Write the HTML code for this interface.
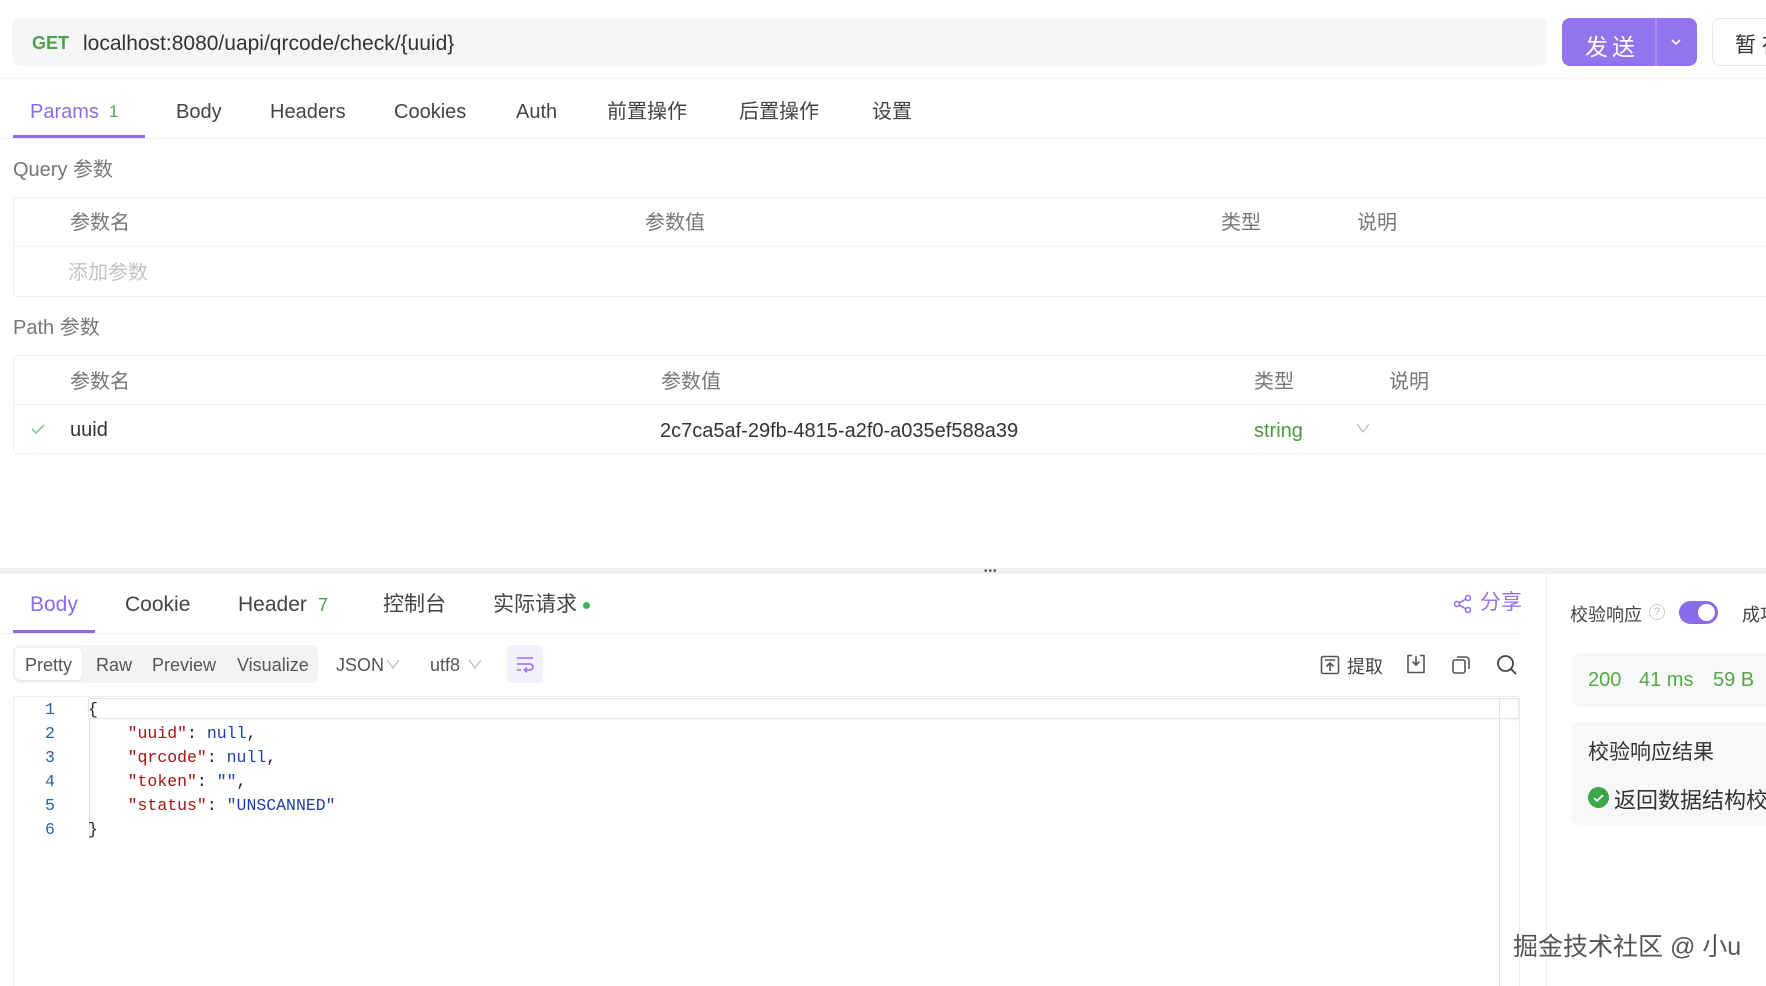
<!DOCTYPE html>
<html><head><meta charset="utf-8"><style>
*{box-sizing:border-box;margin:0;padding:0}
body{width:1766px;height:986px;overflow:hidden;background:#fff;font-family:"Liberation Sans","Noto Sans CJK SC",sans-serif;color:#444;position:relative}
.a{position:absolute;white-space:nowrap}
.t{font-size:20px;line-height:24px;color:#444}
.g{color:#666}
.mono{font-family:"Liberation Mono","DejaVu Sans Mono",monospace;font-size:16.5px;line-height:24px}
.hl{position:absolute;height:1px;background:#eeeeee}
</style></head><body>
<!-- URL bar -->
<div class="a" style="left:12px;top:18px;width:1535px;height:48px;background:#f6f6f7;border-radius:8px"></div>
<div class="a" style="left:32px;top:33px;font-size:18px;font-weight:bold;color:#4ca24c">GET</div>
<div class="a" style="left:83px;top:32px;font-size:21px;color:#333">localhost:8080/uapi/qrcode/check/{uuid}</div>
<div class="a" style="left:1562px;top:18px;width:135px;height:48px;background:#9373ee;border-radius:8px"></div>
<div class="a" style="left:1655px;top:18px;width:2px;height:48px;background:#a78cf3"></div>
<div class="a" style="left:1585px;top:28px;font-size:23px;color:#fff;letter-spacing:4px">发送</div>
<svg class="a" style="left:1670px;top:37px" width="12" height="10"><path d="M2 3l4 4 4-4" stroke="#fff" stroke-width="1.6" fill="none"/></svg>
<div class="a" style="left:1712px;top:18px;width:70px;height:48px;border:1px solid #e8e8e8;border-radius:8px"></div>
<div class="a" style="left:1735px;top:29px;font-size:21px;color:#333">暂 存</div>
<div class="hl" style="left:0;top:78px;width:1766px"></div>
<!-- tabs -->
<div class="a t" style="left:30px;top:100px;color:#8a6de6">Params</div>
<div class="a" style="left:109px;top:102px;font-size:17px;color:#4ca24c">1</div>
<div class="a t" style="left:176px;top:100px">Body</div>
<div class="a t" style="left:270px;top:100px">Headers</div>
<div class="a t" style="left:394px;top:100px">Cookies</div>
<div class="a t" style="left:516px;top:100px">Auth</div>
<div class="a t" style="left:607px;top:100px">前置操作</div>
<div class="a t" style="left:739px;top:100px">后置操作</div>
<div class="a t" style="left:872px;top:100px">设置</div>
<div class="hl" style="left:0;top:138px;width:1766px"></div>
<div class="a" style="left:13px;top:135px;width:132px;height:3px;background:#8c6be8"></div>
<!-- Query -->
<div class="a t g" style="left:13px;top:158px;color:#777">Query 参数</div>
<div class="a" style="left:13px;top:197px;width:1760px;height:100px;border:1px solid #eee;border-radius:4px"></div>
<div class="hl" style="left:13px;top:246px;width:1753px"></div>
<div class="a t g" style="left:70px;top:211px;color:#777">参数名</div>
<div class="a t g" style="left:645px;top:211px;color:#777">参数值</div>
<div class="a t g" style="left:1221px;top:211px;color:#777">类型</div>
<div class="a t g" style="left:1357px;top:211px;color:#777">说明</div>
<div class="a t" style="left:68px;top:261px;color:#c4c4c4">添加参数</div>
<!-- Path -->
<div class="a t g" style="left:13px;top:316px;color:#777">Path 参数</div>
<div class="a" style="left:13px;top:355px;width:1760px;height:99px;border:1px solid #eee;border-radius:4px"></div>
<div class="hl" style="left:13px;top:404px;width:1753px"></div>
<div class="a t g" style="left:70px;top:370px;color:#777">参数名</div>
<div class="a t g" style="left:661px;top:370px;color:#777">参数值</div>
<div class="a t g" style="left:1254px;top:370px;color:#777">类型</div>
<div class="a t g" style="left:1389px;top:370px;color:#777">说明</div>
<svg class="a" style="left:30px;top:422px" width="16" height="14"><path d="M2 7l4 4 8-8" stroke="#7fcf9a" stroke-width="1.6" fill="none"/></svg>
<div class="a t" style="left:70px;top:418px;color:#333">uuid</div>
<div class="a t" style="left:660px;top:419px;color:#333">2c7ca5af-29fb-4815-a2f0-a035ef588a39</div>
<div class="a t" style="left:1254px;top:419px;color:#4c9a3c">string</div>
<svg class="a" style="left:1356px;top:422px" width="14" height="12"><path d="M1 2l6 8 6-8" stroke="#bbb" stroke-width="1.2" fill="none"/></svg>
<!-- splitter -->
<div class="a" style="left:0;top:568px;width:1766px;height:6px;background:#f0f0f2"></div>
<div class="a" style="left:984px;top:566px;font-size:10px;color:#555;letter-spacing:1px">•••</div>
<!-- bottom tabs -->
<div class="a t" style="left:30px;top:593px;color:#8a6de6;font-size:21px">Body</div>
<div class="a t" style="left:125px;top:593px;font-size:21px">Cookie</div>
<div class="a t" style="left:238px;top:593px;font-size:21px">Header</div>
<div class="a" style="left:318px;top:595px;font-size:18px;color:#4ca24c">7</div>
<div class="a t" style="left:383px;top:593px;font-size:21px">控制台</div>
<div class="a t" style="left:493px;top:593px;font-size:21px">实际请求</div>
<div class="a" style="left:583px;top:602px;width:7px;height:7px;border-radius:50%;background:#3cb45a"></div>
<div class="hl" style="left:0;top:633px;width:1520px"></div>
<div class="a" style="left:13px;top:630px;width:82px;height:3px;background:#8c6be8"></div>
<svg class="a" style="left:1453px;top:594px" width="20" height="20"><g stroke="#9373ee" stroke-width="1.6" fill="none"><circle cx="15" cy="4" r="2.5"/><circle cx="4" cy="10" r="2.5"/><circle cx="15" cy="16" r="2.5"/><path d="M6.3 8.8l6.5-3.6M6.3 11.2l6.5 3.6"/></g></svg>
<div class="a t" style="left:1480px;top:591px;color:#9373ee;font-size:21px">分享</div>
<!-- toolbar -->
<div class="a" style="left:13px;top:645px;width:305px;height:38px;background:#f4f4f5;border-radius:6px"></div>
<div class="a" style="left:15px;top:648px;width:67px;height:32px;background:#fff;border-radius:5px;box-shadow:0 1px 2px rgba(0,0,0,.08)"></div>
<div class="a" style="left:25px;top:655px;font-size:18px;color:#555">Pretty</div>
<div class="a" style="left:96px;top:655px;font-size:18px;color:#555">Raw</div>
<div class="a" style="left:152px;top:655px;font-size:18px;color:#555">Preview</div>
<div class="a" style="left:237px;top:655px;font-size:18px;color:#555">Visualize</div>
<div class="a" style="left:336px;top:655px;font-size:18px;color:#555">JSON</div>
<svg class="a" style="left:386px;top:658px" width="14" height="12"><path d="M1 2l6 8 6-8" stroke="#bbb" stroke-width="1.2" fill="none"/></svg>
<div class="a" style="left:430px;top:655px;font-size:18px;color:#555">utf8</div>
<svg class="a" style="left:468px;top:658px" width="14" height="12"><path d="M1 2l6 8 6-8" stroke="#bbb" stroke-width="1.2" fill="none"/></svg>
<div class="a" style="left:507px;top:645px;width:36px;height:38px;background:#f3f0fd;border-radius:6px"></div>
<svg class="a" style="left:515px;top:655px" width="20" height="18"><g stroke="#9373ee" stroke-width="1.6" fill="none"><path d="M2 3h16M2 9h13a3 3 0 010 6h-5M12 12.5l-2.5 2.5 2.5 2.5M2 15h4"/></g></svg>
<svg class="a" style="left:1320px;top:655px" width="20" height="20"><g stroke="#555" stroke-width="1.6" fill="none"><rect x="1.5" y="1.5" width="17" height="17" rx="1.5"/><path d="M5 5h10M10 16V8M6.5 11.5L10 8l3.5 3.5"/></g></svg>
<div class="a" style="left:1347px;top:653px;font-size:18px;color:#444">提取</div>
<svg class="a" style="left:1406px;top:654px" width="20" height="20"><g stroke="#555" stroke-width="1.6" fill="none"><path d="M6 1.5H2v17h16v-17h-4M10 2v9M6.5 7.5L10 11l3.5-3.5"/></g></svg>
<svg class="a" style="left:1451px;top:655px" width="20" height="20"><g stroke="#555" stroke-width="1.6" fill="none"><rect x="2" y="5" width="12" height="13" rx="2"/><path d="M6 2h9a3 3 0 013 3v9"/></g></svg>
<svg class="a" style="left:1496px;top:654px" width="22" height="22"><g stroke="#444" stroke-width="1.8" fill="none"><circle cx="9.5" cy="9.5" r="7.5"/><path d="M15 15l5 5"/></g></svg>
<!-- editor -->
<div class="a" style="left:13px;top:696px;width:1px;height:290px;background:#eee"></div>
<div class="a" style="left:13px;top:696px;width:1507px;height:1px;background:#eee"></div>
<div class="a" style="left:88px;top:698px;width:1431px;height:21px;border:1px solid #e6e6e6;box-shadow:0 1px 2px rgba(0,0,0,.05)"></div>
<div class="a" style="left:89px;top:719px;width:1px;height:120px;background:#ddd"></div>
<div class="a" style="left:1499px;top:698px;width:1px;height:288px;background:#e2e2e2"></div>
<div class="a" style="left:1519px;top:698px;width:1px;height:288px;background:#eee"></div>
<div class="a mono" style="left:44px;top:698px;color:#2a5fa8;text-align:center;width:12px">1<br>2<br>3<br>4<br>5<br>6</div>
<div class="a mono" style="left:88px;top:698px;color:#222">{<br>&nbsp;&nbsp;&nbsp;&nbsp;<span style="color:#a31515">"uuid"</span>: <span style="color:#1c3fa8">null</span>,<br>&nbsp;&nbsp;&nbsp;&nbsp;<span style="color:#a31515">"qrcode"</span>: <span style="color:#1c3fa8">null</span>,<br>&nbsp;&nbsp;&nbsp;&nbsp;<span style="color:#a31515">"token"</span>: <span style="color:#1c3fa8">""</span>,<br>&nbsp;&nbsp;&nbsp;&nbsp;<span style="color:#a31515">"status"</span>: <span style="color:#1c3fa8">"UNSCANNED"</span><br>}</div>
<!-- right panel -->
<div class="a" style="left:1546px;top:574px;width:1px;height:412px;background:#eee"></div>
<div class="a" style="left:1570px;top:601px;font-size:18px;color:#444">校验响应</div>
<div class="a" style="left:1649px;top:604px;width:16px;height:16px;border:1px solid #ccc;border-radius:50%;font-size:11px;color:#bbb;text-align:center;line-height:14px">?</div>
<div class="a" style="left:1679px;top:601px;width:39px;height:23px;background:#8c6be8;border-radius:12px"></div>
<div class="a" style="left:1698px;top:604px;width:17px;height:17px;background:#fff;border-radius:50%"></div>
<div class="a" style="left:1742px;top:601px;font-size:18px;color:#444">成功</div>
<div class="a" style="left:1572px;top:653px;width:200px;height:54px;background:#f7f8fa;border-radius:8px"></div>
<div class="a" style="left:1588px;top:669px;font-size:20px;color:#5aa845">200</div>
<div class="a" style="left:1639px;top:669px;font-size:20px;color:#5aa845">41 ms</div>
<div class="a" style="left:1713px;top:669px;font-size:20px;color:#5aa845">59 B</div>
<div class="a" style="left:1572px;top:722px;width:200px;height:103px;background:#f7f8fa;border-radius:8px"></div>
<div class="a" style="left:1588px;top:736px;font-size:21px;color:#333">校验响应结果</div>
<div class="a" style="left:1588px;top:787px;width:21px;height:21px;background:#3da64a;border-radius:50%"></div>
<svg class="a" style="left:1592px;top:791px" width="13" height="13"><path d="M2 7l3 3 6-6" stroke="#fff" stroke-width="1.8" fill="none"/></svg>
<div class="a" style="left:1614px;top:783px;font-size:22px;color:#333">返回数据结构校验</div>
<!-- watermark -->
<div class="a" style="left:1513px;top:927px;font-size:25px;color:#555;text-shadow:0 0 2px #fff,1px 1px 1px #fff">掘金技术社区 @ 小u</div>
</body></html>
